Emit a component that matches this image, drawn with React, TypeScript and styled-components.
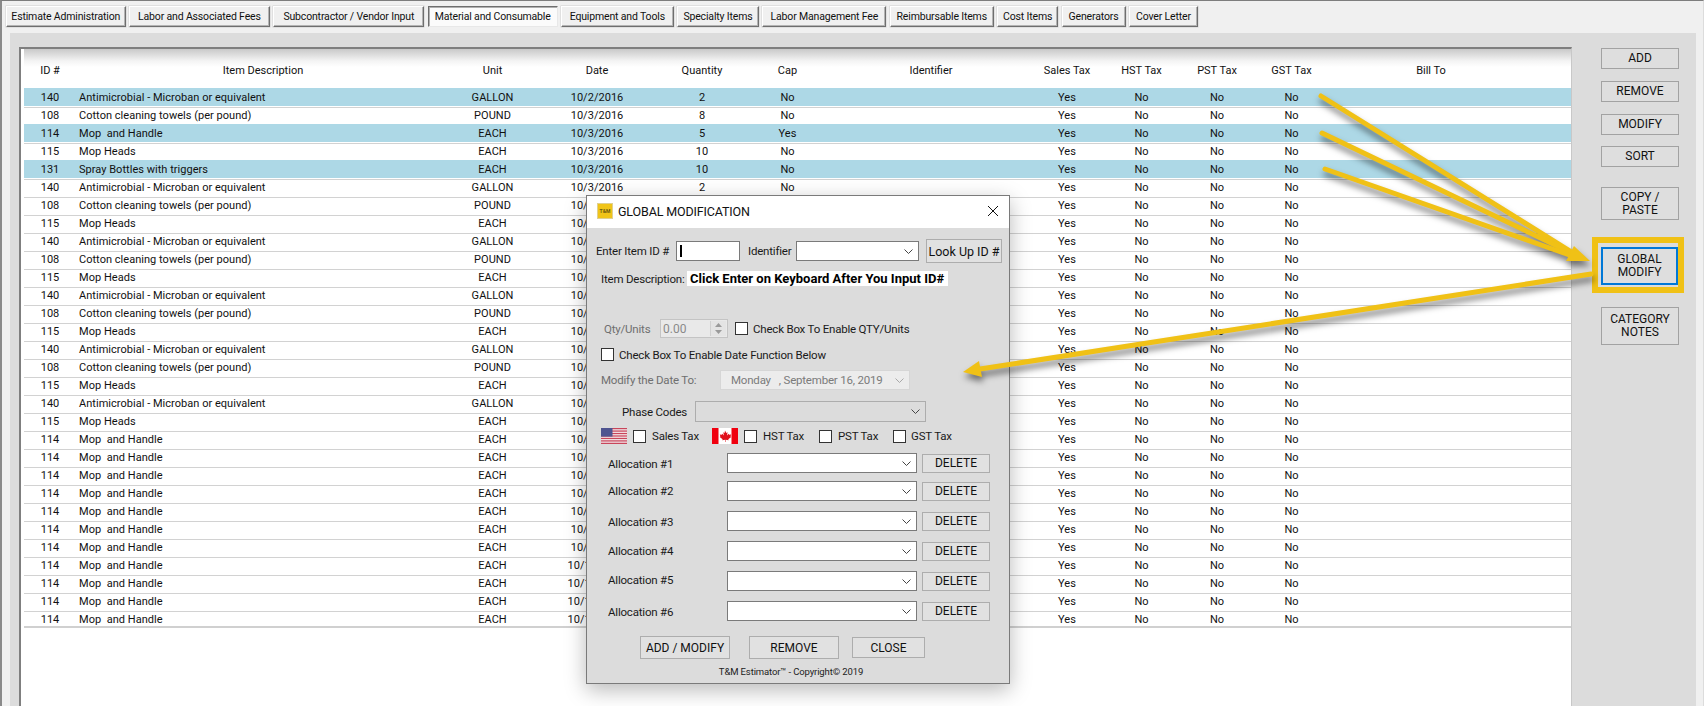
import React from "react";
import styled, { createGlobalStyle } from "styled-components";

const Global = createGlobalStyle`
  html, body { margin: 0; padding: 0; background: #fff; overflow: hidden; }
  * { box-sizing: border-box; }
`;

const FONT = `Roboto, "Liberation Sans", sans-serif`;

const Page = styled.div`
  position: relative;
  width: 1705px;
  height: 706px;
  overflow: hidden;
  background: #fff;
  font-family: ${FONT};
  color: #111;
`;
const Shell = styled.div`
  width: 1704px;
  height: 706px;
  display: flex;
  flex-direction: column;
  background: #f0f0f0;
  border-top: 1px solid #7d7d7d;
  border-left: 2px solid #8a8a8a;
  border-right: 1px solid #dcdcdc;
`;
const TabBar = styled.div`
  height: 32px;
  flex: none;
  display: flex;
  gap: 3.4px;
  padding: 5px 0 0 4px;
`;
const Tab = styled.div<{ $w: number; $active?: boolean }>`
  width: ${(p) => p.$w}px;
  height: 21px;
  flex: none;
  display: flex;
  align-items: center;
  justify-content: center;
  font-size: 10.5px;
  letter-spacing: -0.16px;
  white-space: nowrap;
  background: ${(p) => (p.$active ? "#fbfbfb" : "#f0f0f0")};
  border: 1px solid;
  border-color: ${(p) => (p.$active ? "#6e6e6e #e8e8e8 #e8e8e8 #6e6e6e" : "#fff #6e6e6e #6e6e6e #fff")};
  box-shadow: ${(p) => (p.$active ? "inset 1px 1px 0 #b0b0b0" : "inset -1px -1px 0 #b4b4b4, 0 0 0 0.5px #d0d0d0")};
`;
const Panel = styled.div`
  flex: 1;
  margin: 0 7px 0 8px;
  display: flex;
  align-items: stretch;
  background: #dcdcdc;
  padding: 14px 0 0 9px;
`;
const TablePane = styled.div`
  width: 1553px;
  flex: none;
  background: #fff;
  border-top: 2px solid #7f7f7f;
  border-left: 2px solid #7f7f7f;
  border-right: 1px solid #c8c8c8;
  padding-left: 3px;
`;
const COLS = "52px 374px 85px 124px 86px 85px 202px 70px 79px 72px 77px 202px 39px";
const HeaderRow = styled.div`
  height: 39px;
  display: grid;
  grid-template-columns: ${COLS};
  align-items: center;
  padding-top: 3px;
  font-size: 11px;
  text-align: center;
  background: linear-gradient(#c9c9c9 0, #f4f4f4 12px, #fff 18px);
`;
const DataRow = styled.div<{ $sel?: boolean; $last?: boolean }>`
  height: 18px;
  display: grid;
  grid-template-columns: ${COLS};
  align-items: center;
  font-size: 11px;
  line-height: 17px;
  letter-spacing: 0.03px;
  text-align: center;
  white-space: pre;
  background: ${(p) => (p.$sel ? "#add8e6" : "#fff")};
  border-top: 1px solid ${(p) => (p.$sel ? "#add8e6" : "#fff")};
  box-shadow: ${(p) => (p.$sel ? "none" : "inset 0 1px 0 #d2d2d2")};
  border-bottom: ${(p) => (p.$last ? "2px solid #d0d0d0" : "0")};
`;
const DescCell = styled.div`
  text-align: left;
  padding-left: 3px;
`;
const Side = styled.div`
  width: 125px;
  flex: none;
  display: flex;
  flex-direction: column;
  align-items: flex-start;
  padding: 1px 0 0 29px;
`;
const SideBtn = styled.div<{ $h: number; $mt?: number; $focus?: boolean }>`
  width: ${(p) => (p.$focus ? 77 : 78)}px;
  height: ${(p) => p.$h}px;
  margin-top: ${(p) => p.$mt ?? 0}px;
  flex: none;
  display: flex;
  align-items: center;
  justify-content: center;
  text-align: center;
  font-size: 12px;
  line-height: 13px;
  background: #dedede;
  border: ${(p) => (p.$focus ? "2px solid #0078d7" : "1px solid #a2a2a2")};
`;
const Highlight = styled.div`
  margin: 17px 0 0 -9px;
  width: 92px;
  height: 56px;
  flex: none;
  border: 6px solid #f0c116;
  padding: 4px 0 0 3px;
`;

/* dialog */
const Dialog = styled.div`
  position: absolute;
  left: 586px;
  top: 195px;
  width: 424px;
  height: 489px;
  background: #dcdcdc;
  border: 1px solid #7a7a7a;
  box-shadow: 0 6px 20px rgba(0, 0, 0, 0.28);
  display: flex;
  flex-direction: column;
  font-size: 11.5px;
  letter-spacing: -0.2px;
`;
const TitleBar = styled.div`
  height: 32px;
  flex: none;
  background: #fff;
  display: flex;
  align-items: center;
  padding: 0 10px 2px 10px;
  letter-spacing: 0;
`;
const Logo = styled.div`
  width: 16px;
  height: 16px;
  background: #f0c419;
  border: 1px solid #e0d090;
  display: flex;
  align-items: center;
  justify-content: center;
  font-size: 5px;
  font-weight: 700;
  color: #6b5a10;
  margin-right: 5px;
  flex: none;
`;
const TitleText = styled.div`
  flex: 1;
  font-size: 12.5px;
  letter-spacing: -0.15px;
`;
const FormRow = styled.div<{ $h: number; $mt: number; $pl: number }>`
  height: ${(p) => p.$h}px;
  margin-top: ${(p) => p.$mt}px;
  padding-left: ${(p) => p.$pl + 1}px;
  flex: none;
  display: flex;
  align-items: center;
  white-space: nowrap;
`;
const Label = styled.div<{ $w?: number; $muted?: boolean; $ml?: number; $mt?: number }>`
  ${(p) => (p.$w ? `width: ${p.$w}px;` : "")}
  margin-left: ${(p) => p.$ml ?? 0}px;
  margin-top: ${(p) => p.$mt ?? 0}px;
  flex: none;
  color: ${(p) => (p.$muted ? "#6f6f6f" : "#1a1a1a")};
`;
const TextInput = styled.div`
  width: 64px;
  height: 20px;
  flex: none;
  background: #fff;
  border: 1px solid #7a7a7a;
  padding: 3px 0 0 3px;
`;
const Caret = styled.div`
  width: 2px;
  height: 12px;
  background: #000;
`;
const Select = styled.div<{ $w: number; $h?: number; $disabled?: boolean; $light?: boolean }>`
  width: ${(p) => p.$w}px;
  height: ${(p) => p.$h ?? 20}px;
  flex: none;
  display: flex;
  align-items: center;
  justify-content: flex-end;
  padding-right: 5px;
  background: ${(p) => (p.$light ? "#ececec" : p.$disabled ? "#dcdcdc" : "#fff")};
  border: 1px solid ${(p) => (p.$light ? "#d6d6d6" : p.$disabled ? "#adadad" : "#7a7a7a")};
`;
const DateText = styled.div`
  flex: 1;
  padding-left: 10px;
  color: #7b7b7b;
  white-space: pre;
`;
const PlainBtn = styled.div<{ $w: number; $h: number; $size?: number; $ml?: number }>`
  width: ${(p) => p.$w}px;
  height: ${(p) => p.$h}px;
  margin-left: ${(p) => p.$ml ?? 0}px;
  flex: none;
  display: flex;
  align-items: center;
  justify-content: center;
  background: #e1e1e1;
  border: 1px solid #adadad;
  font-size: ${(p) => p.$size ?? 12}px;
  letter-spacing: 0;
`;
const DescBox = styled.div`
  width: 261px;
  height: 15px;
  flex: none;
  background: #fff;
  color: #000;
  font-weight: 700;
  font-size: 13px;
  line-height: 15px;
  padding-left: 3px;
  letter-spacing: 0;
`;
const Spinner = styled.div`
  width: 68px;
  height: 19px;
  flex: none;
  display: flex;
  align-items: center;
  justify-content: space-between;
  padding: 0 1px 0 2px;
  background: #e9e9e9;
  border: 1px solid #c4c4c4;
  color: #8a8a8a;
  font-size: 12px;
  letter-spacing: 0;
`;
const SpinArrows = styled.div`
  width: 16px;
  height: 15px;
  flex: none;
  display: flex;
  flex-direction: column;
  align-items: center;
  justify-content: space-around;
  background: #e4e4e4;
  border-left: 1px solid #d0d0d0;
`;
const Check = styled.div<{ $ml?: number }>`
  width: 13px;
  height: 13px;
  flex: none;
  margin-left: ${(p) => p.$ml ?? 0}px;
  background: #fff;
  border: 1px solid #333;
`;
const FlagSvg = styled.svg`
  width: 26px;
  height: 16px;
  flex: none;
`;
const Footer = styled.div`
  margin-top: 7px;
  padding-right: 14px;
  flex: none;
  text-align: center;
  font-size: 9.5px;
  letter-spacing: -0.12px;
  color: #222;
`;
const ArrowLayer = styled.svg`
  position: absolute;
  left: 0;
  top: 0;
  width: 1705px;
  height: 706px;
  pointer-events: none;
`;
const ArrowGroup = styled.g`
  filter: drop-shadow(1px 5px 3px rgba(0, 0, 0, 0.5));
`;

const Chevron = ({ color = "#444" }: { color?: string }) => (
  <svg width="9" height="5" viewBox="0 0 9 5" fill="none" style={{ flex: "none" }}>
    <path d="M0.5 0.5 L4.5 4.5 L8.5 0.5" stroke={color} strokeWidth="1" />
  </svg>
);

const Tri = ({ up }: { up?: boolean }) => (
  <svg width="7" height="4" viewBox="0 0 7 4" style={{ display: "block" }}>
    <path d={up ? "M3.5 0 L7 4 H0 Z" : "M0 0 H7 L3.5 4 Z"} fill="#9a9a9a" />
  </svg>
);

const UsFlag = () => (
  <FlagSvg viewBox="0 0 26 16">
    <rect width="26" height="16" fill="#f4e8ea" />
    {[0, 1, 2, 3, 4, 5, 6].map((i) => (
      <rect key={i} y={i * 2.46} width="26" height="1.23" fill="#c8455a" />
    ))}
    <rect width="11.5" height="8.6" fill="#4f5490" />
  </FlagSvg>
);

const CaFlag = () => (
  <FlagSvg viewBox="0 0 26 16">
    <rect width="26" height="16" fill="#fff" />
    <rect width="6.5" height="16" fill="#f0000f" />
    <rect x="19.5" width="6.5" height="16" fill="#f0000f" />
    <path
      d="M13 2.5 l1.3 2.4 1.3-.7-.6 3.2 1.7-1.6.4 1 2-.3-.6 2 .7.4-2.9 2.3.3 1-2.9-.4V14h-.5v-2.2l-2.9.4.3-1-2.9-2.3.7-.4-.6-2 2 .3.4-1 1.7 1.6-.6-3.2 1.3.7z"
      fill="#e0101c"
    />
  </FlagSvg>
);

const A = "Antimicrobial - Microban or equivalent";
const C = "Cotton cleaning towels (per pound)";
const M = "Mop  and Handle";
const H = "Mop Heads";
const S = "Spray Bottles with triggers";
const U: Record<string, string> = { [A]: "GALLON", [C]: "POUND", [M]: "EACH", [H]: "EACH", [S]: "EACH" };
const ID: Record<string, string> = { [A]: "140", [C]: "108", [M]: "114", [H]: "115", [S]: "131" };

type RowData = { d: string; date: string; q: string; cap: string; sel?: boolean };
const head: RowData[] = [
  { d: A, date: "10/2/2016", q: "2", cap: "No", sel: true },
  { d: C, date: "10/3/2016", q: "8", cap: "No" },
  { d: M, date: "10/3/2016", q: "5", cap: "Yes", sel: true },
  { d: H, date: "10/3/2016", q: "10", cap: "No" },
  { d: S, date: "10/3/2016", q: "10", cap: "No", sel: true },
  { d: A, date: "10/3/2016", q: "2", cap: "No" },
];
const order = [C, H, A, C, H, A, C, H, A, C, H, A, H, ...Array(11).fill(M)] as string[];
const rows: RowData[] = [
  ...head,
  ...order.map((d, i) => ({
    d,
    date: i >= 20 ? "10/10/2016" : "10/3/2016",
    q: d === C ? "8" : d === A ? "2" : d === M ? "5" : "10",
    cap: "No",
  })),
];

const tabs: [string, number][] = [
  ["Estimate Administration", 119.5],
  ["Labor and Associated Fees", 141],
  ["Subcontractor / Vendor Input", 151],
  ["Material and Consumable", 130],
  ["Equipment and Tools", 112.5],
  ["Specialty Items", 82],
  ["Labor Management Fee", 124],
  ["Reimbursable Items", 104],
  ["Cost Items", 61],
  ["Generators", 64],
  ["Cover Letter", 69],
];
const headers = ["ID #", "Item Description", "Unit", "Date", "Quantity", "Cap", "Identifier", "Sales Tax", "HST Tax", "PST Tax", "GST Tax", "Bill To", ""];

const allocations: { n: number; mt: number; shift: number }[] = [
  { n: 1, mt: 9, shift: 2 },
  { n: 2, mt: 8, shift: 0 },
  { n: 3, mt: 10, shift: 2 },
  { n: 4, mt: 10, shift: 0 },
  { n: 5, mt: 10, shift: -2 },
  { n: 6, mt: 10, shift: 2 },
];

export default function App() {
  return (
    <Page>
      <Global />
      <Shell>
        <TabBar>
          {tabs.map(([t, w], i) => (
            <Tab key={t} $w={w} $active={i === 3}>
              {t}
            </Tab>
          ))}
        </TabBar>
        <Panel>
          <TablePane>
            <HeaderRow>
              {headers.map((h, i) => (
                <div key={i}>{h}</div>
              ))}
            </HeaderRow>
            {rows.map((r, i) => (
              <DataRow key={i} $sel={r.sel} $last={i === rows.length - 1}>
                <div>{ID[r.d]}</div>
                <DescCell>{r.d}</DescCell>
                <div>{U[r.d]}</div>
                <div>{r.date}</div>
                <div>{r.q}</div>
                <div>{r.cap}</div>
                <div />
                <div>Yes</div>
                <div>No</div>
                <div>No</div>
                <div>No</div>
                <div />
                <div />
              </DataRow>
            ))}
          </TablePane>
          <Side>
            <SideBtn $h={21}>ADD</SideBtn>
            <SideBtn $h={21} $mt={12}>REMOVE</SideBtn>
            <SideBtn $h={21} $mt={12}>MODIFY</SideBtn>
            <SideBtn $h={21} $mt={11}>SORT</SideBtn>
            <SideBtn $h={33} $mt={20}>COPY /<br />PASTE</SideBtn>
            <Highlight>
              <SideBtn $h={38} $focus>GLOBAL<br />MODIFY</SideBtn>
            </Highlight>
            <SideBtn $h={38} $mt={14}>CATEGORY<br />NOTES</SideBtn>
          </Side>
        </Panel>
      </Shell>

      <Dialog>
        <TitleBar>
          <Logo>T&amp;M</Logo>
          <TitleText>GLOBAL MODIFICATION</TitleText>
          <svg width="12" height="12" viewBox="0 0 12 12" fill="none">
            <path d="M1 1 L11 11 M11 1 L1 11" stroke="#111" strokeWidth="1" />
          </svg>
        </TitleBar>
        <FormRow $h={24} $mt={11} $pl={8}>
          <Label $w={80}>Enter Item ID #</Label>
          <TextInput><Caret /></TextInput>
          <Label $w={48} $ml={8}>Identifier</Label>
          <Select $w={123}><Chevron /></Select>
          <PlainBtn $w={76} $h={24} $size={12.5} $ml={7}>Look Up ID #</PlainBtn>
        </FormRow>
        <FormRow $h={15} $mt={8} $pl={13}>
          <Label $w={86}>Item Description:</Label>
          <DescBox>Click Enter on Keyboard After You Input ID#</DescBox>
        </FormRow>
        <FormRow $h={19} $mt={33} $pl={16}>
          <Label $w={56} $muted>Qty/Units</Label>
          <Spinner>
            <span>0.00</span>
            <SpinArrows><Tri up /><Tri /></SpinArrows>
          </Spinner>
          <Check $ml={7} />
          <Label $ml={5}>Check Box To Enable QTY/Units</Label>
        </FormRow>
        <FormRow $h={13} $mt={10} $pl={13}>
          <Check />
          <Label $ml={5}>Check Box To Enable Date Function Below</Label>
        </FormRow>
        <FormRow $h={20} $mt={9} $pl={13}>
          <Label $w={119} $muted>Modify the Date To:</Label>
          <Select $w={190} $light>
            <DateText>{"Monday   , September 16, 2019"}</DateText>
            <Chevron color="#a8a8a8" />
          </Select>
        </FormRow>
        <FormRow $h={21} $mt={11} $pl={34}>
          <Label $w={73}>Phase Codes</Label>
          <Select $w={231} $h={21} $disabled><Chevron /></Select>
        </FormRow>
        <FormRow $h={16} $mt={6} $pl={13}>
          <UsFlag />
          <Check $ml={6} />
          <Label $w={60} $ml={6}>Sales Tax</Label>
          <CaFlag />
          <Check $ml={6} />
          <Label $w={56} $ml={6}>HST Tax</Label>
          <Check />
          <Label $w={55} $ml={6}>PST Tax</Label>
          <Check />
          <Label $ml={5}>GST Tax</Label>
        </FormRow>
        {allocations.map(({ n, mt, shift }) => (
          <FormRow key={n} $h={20} $mt={mt} $pl={20}>
            <Label $w={119} $mt={shift}>Allocation #{n}</Label>
            <Select $w={190}><Chevron /></Select>
            <PlainBtn $w={68} $h={19} $ml={5}>DELETE</PlainBtn>
          </FormRow>
        ))}
        <FormRow $h={23} $mt={15} $pl={52}>
          <PlainBtn $w={90} $h={23}>ADD / MODIFY</PlainBtn>
          <PlainBtn $w={90} $h={23} $ml={19}>REMOVE</PlainBtn>
          <PlainBtn $w={73} $h={21} $ml={13}>CLOSE</PlainBtn>
        </FormRow>
        <Footer>T&amp;M Estimator™ - Copyright© 2019</Footer>
      </Dialog>

      <ArrowLayer viewBox="0 0 1705 706">
        <ArrowGroup>
          <g stroke="#f0c116" strokeWidth="5" strokeLinecap="round" fill="none">
            <path d="M1321 96 L1578 256" />
            <path d="M1322 133 L1578 256" />
            <path d="M1325 169 L1578 258" />
            <path d="M1591 274 L980 369" />
          </g>
          <path d="M1590 261 L1574 246 L1566 261 Z" fill="#f0c116" />
          <path d="M963 372 L979 361 L982 377 Z" fill="#f0c116" />
        </ArrowGroup>
      </ArrowLayer>
    </Page>
  );
}
